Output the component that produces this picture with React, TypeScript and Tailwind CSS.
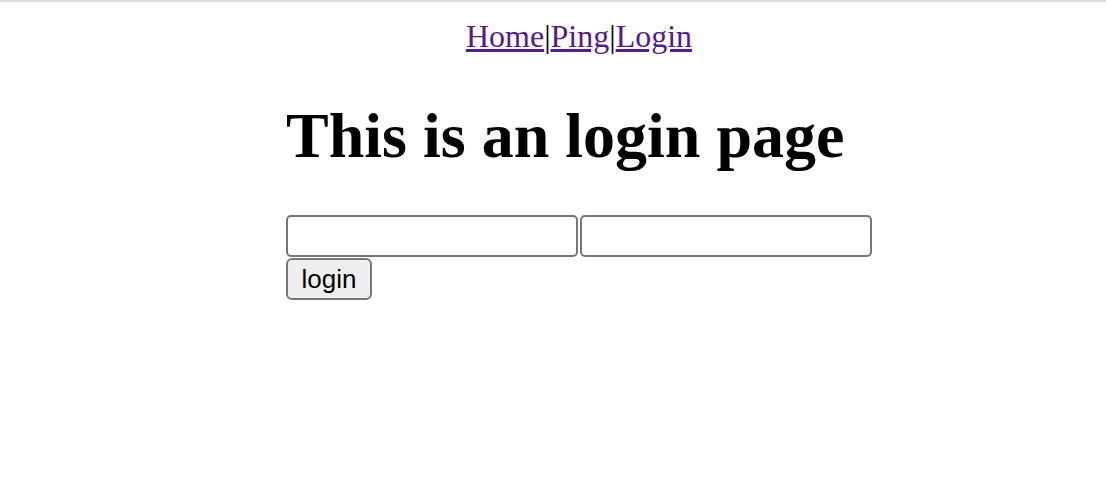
export default function App() {
  return (
    <div className="min-h-[484px] border-t-2 border-[#dcdcdc] bg-white pl-[52px] font-['Liberation_Serif',serif] text-black">
      <div className="pt-4 text-center text-[32px] leading-[36.8px]">
        <a href="#" className="text-[#551a8b] underline">
          Home
        </a>
        <span className="text-black">|</span>
        <a href="#" className="text-[#551a8b] underline">
          Ping
        </a>
        <span className="text-black">|</span>
        <a href="#" className="text-[#551a8b] underline">
          Login
        </a>
      </div>
      <div className="flex flex-col items-center">
        <div className="flex flex-col">
          <h1 className="mt-[44px] mb-[43px] text-[64px] font-bold leading-[73.6px]">
            This is an login page
          </h1>
          <form className="flex flex-col items-start" onSubmit={(e) => e.preventDefault()}>
            <div className="flex">
              <input
                type="text"
                className="mr-[2px] h-[42px] w-[292px] rounded-[5px] border-2 border-[#767676] bg-white px-1 text-[26px]"
              />
              <input
                type="password"
                className="h-[42px] w-[292px] rounded-[5px] border-2 border-[#767676] bg-white px-1 text-[26px]"
              />
            </div>
            <button
              type="submit"
              className="mt-px h-[42px] w-[86px] rounded-[6px] border-2 border-[#767676] bg-[#efefef] font-['Liberation_Sans',Arial,sans-serif] text-[26px] leading-none text-black"
            >
              login
            </button>
          </form>
        </div>
      </div>
    </div>
  );
}
